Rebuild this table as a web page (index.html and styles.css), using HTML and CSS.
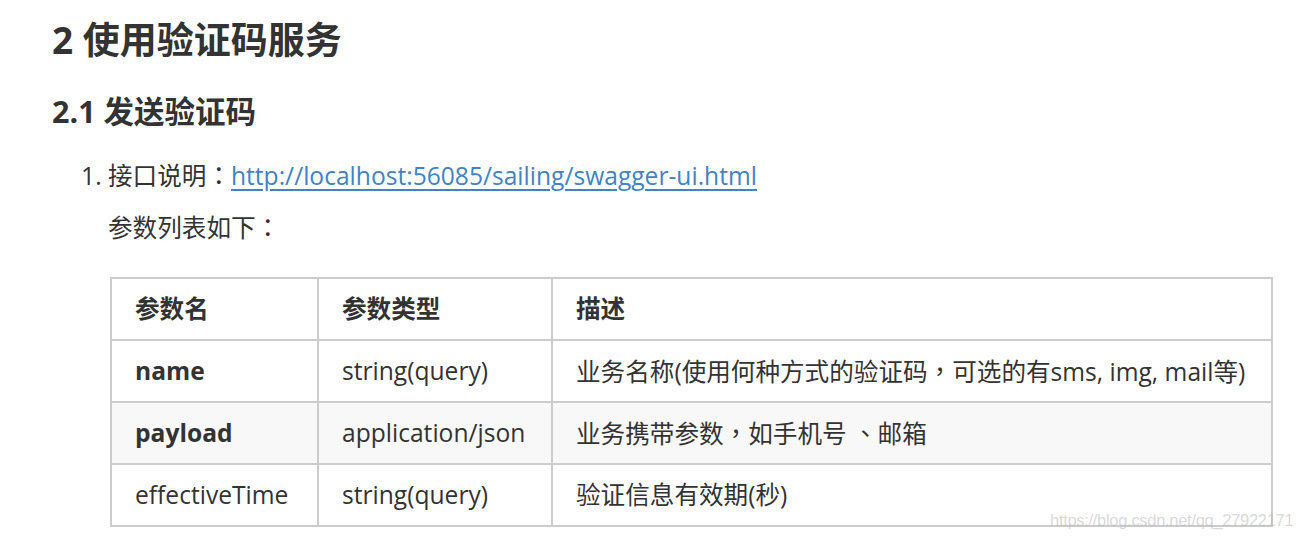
FILE: index.html
```html
<!DOCTYPE html>
<html lang="zh-CN">
<head>
<meta charset="utf-8">
<title>使用验证码服务</title>
<link rel="stylesheet" href="styles.css">
</head>
<body>
<main class="doc">
  <h1 class="h1">2 使用验证码服务</h1>
  <h2 class="h2">2.1 发送验证码</h2>
  <ol class="list">
    <li class="item">
      <p class="line">接口说明<span class="punct" lang="zh-TW">：</span><a class="link" href="#">http://localhost:56085/sailing/swagger-ui.html</a></p>
      <p class="line sub">参数列表如下<span class="punct" lang="zh-TW">：</span></p>
      <table class="params">
        <colgroup>
          <col class="c1">
          <col class="c2">
          <col class="c3">
        </colgroup>
        <thead>
          <tr><th>参数名</th><th>参数类型</th><th>描述</th></tr>
        </thead>
        <tbody>
          <tr><td class="b">name</td><td>string(query)</td><td>业务名称(使用何种方式的验证码<span class="punct" lang="zh-TW">，</span>可选的有sms, img, mail等)</td></tr>
          <tr class="alt"><td class="b">payload</td><td>application/json</td><td>业务携带参数<span class="punct" lang="zh-TW">，</span>如手机号 <span class="punct" lang="zh-TW">、</span>邮箱</td></tr>
          <tr><td>effectiveTime</td><td>string(query)</td><td>验证信息有效期(秒)</td></tr>
        </tbody>
      </table>
    </li>
  </ol>
</main>
<div class="watermark">https://blog.csdn.net/qq_27922171</div>
</body>
</html>
```

FILE: styles.css
```css
html, body {
  margin: 0;
  padding: 0;
  background: #fff;
}
body {
  font-family: "Open Sans", "Noto Sans CJK SC", sans-serif;
  color: #333;
  font-size: 24.6px;
  width: 1302px;
  height: 541px;
  overflow: hidden;
  position: relative;
}
.doc {
  padding-left: 52px;
  padding-top: 15px;
}
.h1 {
  margin: 0;
  font-size: 37px;
  line-height: 50px;
  font-weight: 700;
}
.h2 {
  margin: 25px 0 0;
  font-size: 30.5px;
  line-height: 42px;
  font-weight: 700;
}
.list {
  margin: 24px 0 0;
  padding-left: 56px;
}
.line {
  margin: 0;
  line-height: 36px;
}
.sub {
  margin-top: 14px;
}
.punct {
  font-family: "Noto Sans CJK TC", sans-serif;
}
.link {
  color: #4183c4;
  text-decoration: underline;
  text-underline-offset: 4px;
}
.params {
  margin: 31px 0 0 2px;
  border-collapse: collapse;
  width: 1163px;
  table-layout: fixed;
}
.c1 { width: 207px; }
.c2 { width: 234px; }
.params th,
.params td {
  border: 2px solid #cccccc;
  height: 60px;
  padding: 0 0 0 23px;
  text-align: left;
  vertical-align: middle;
  white-space: nowrap;
  line-height: 36px;
}
.params th {
  font-weight: 700;
}
.params .b {
  font-weight: 700;
}
.params .alt td {
  background: #f8f8f8;
}
.watermark {
  position: absolute;
  left: 1050px;
  top: 511px;
  font-family: "Liberation Sans", sans-serif;
  font-size: 16.5px;
  letter-spacing: -0.3px;
  color: rgba(185, 185, 185, 0.55);
  white-space: nowrap;
}
```
